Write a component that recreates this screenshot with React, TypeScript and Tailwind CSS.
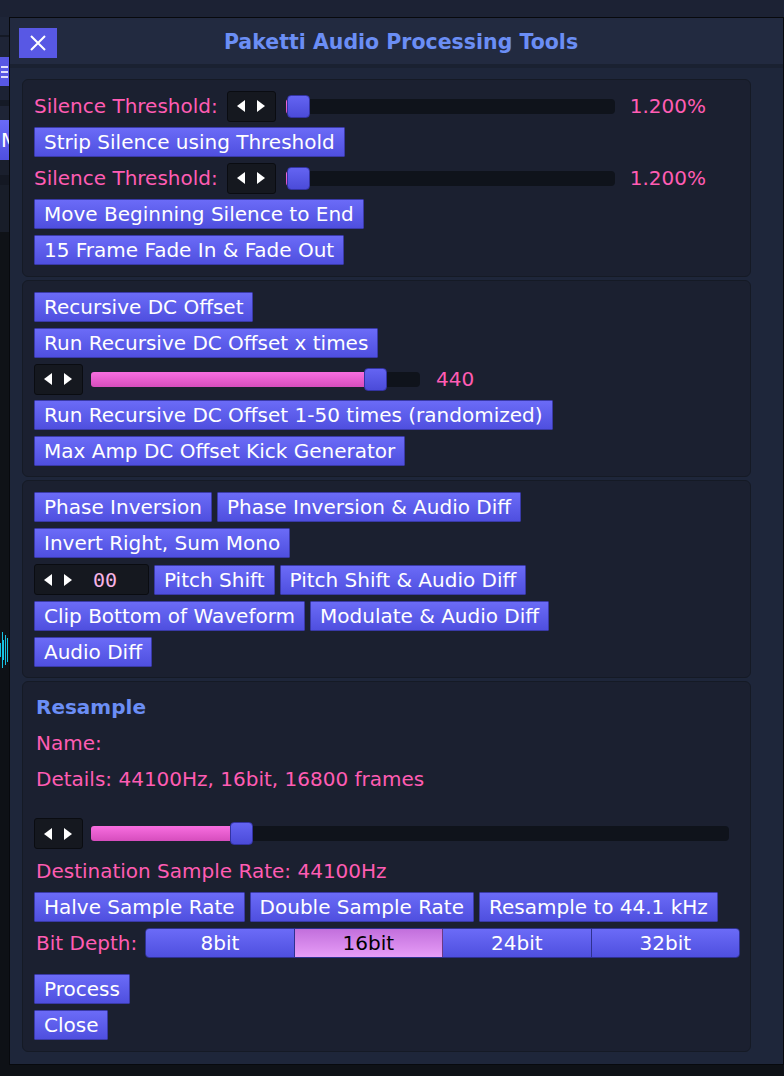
import React from 'react';
import clsx from 'clsx';

const font = { fontFamily: '"DejaVu Sans", "Liberation Sans", sans-serif' };

function Btn({ children, className }: { children: React.ReactNode; className?: string }) {
  return (
    <button
      className={clsx(
        'h-[30px] px-[9px] border border-[#3a3aa8] bg-linear-to-b from-[#6b6bf7] to-[#4f4fdf] text-white text-[20px] leading-none whitespace-nowrap rounded-[1px] flex items-center',
        className
      )}
    >
      {children}
    </button>
  );
}

function Arrows() {
  return (
    <svg width="28" height="14" viewBox="0 0 28 14" className="shrink-0">
      <polygon points="0,7 8,1 8,13" fill="#ffffff" />
      <polygon points="28,7 20,1 20,13" fill="#ffffff" />
    </svg>
  );
}

function ArrowBox({ className, children }: { className?: string; children?: React.ReactNode }) {
  return (
    <div className={clsx('h-[31px] w-[49px] shrink-0 rounded-[3px] border border-[#0a0c11] bg-[#15181f] flex items-center pl-[9px]', className)}>
      <Arrows />
      {children}
    </div>
  );
}

function Slider({ width, pos }: { width: number; pos: number }) {
  return (
    <div className="relative h-[15px] shrink-0 rounded-[4px] bg-[#0f131b]" style={{ width }}>
      <div
        className="absolute left-0 top-0 h-[15px] rounded-[3px] bg-linear-to-b from-[#f86ee0] to-[#d64dbd]"
        style={{ width: pos + 11 }}
      />
      <div
        className="absolute top-[-4px] h-[23px] w-[23px] rounded-[4px] border border-[#3333a2] bg-linear-to-b from-[#6464f2] to-[#4b4bd9]"
        style={{ left: pos }}
      />
    </div>
  );
}

function Pink({ children, className }: { children: React.ReactNode; className?: string }) {
  return <span className={clsx('text-[#ff5cb3] text-[20px] leading-none whitespace-nowrap', className)}>{children}</span>;
}

function Panel({ children, className }: { children: React.ReactNode; className?: string }) {
  return (
    <div className={clsx('w-[729px] rounded-[6px] border border-[#151a25] bg-[#1b2030] pl-[11px] flex flex-col', className)}>
      {children}
    </div>
  );
}

function ThresholdRow() {
  return (
    <div className="flex items-center h-[30px]">
      <Pink>Silence Threshold:</Pink>
      <ArrowBox className="ml-[9px]" />
      <div className="ml-[10px]">
        <Slider width={329} pos={1} />
      </div>
      <Pink className="ml-[15px]">1.200%</Pink>
    </div>
  );
}

export default function App() {
  return (
    <div className="relative h-[1076px] w-[784px] overflow-hidden bg-[#0e1116]" style={font}>
      {/* app behind the dialog */}
      <div className="h-[17px] bg-[#1c2234]" />
      <div className="w-[10px] flex flex-col">
        <div className="h-[18px] bg-[#1e2538]" />
        <div className="h-[2px] bg-[#141925]" />
        <div className="h-[20px] bg-[#1e2436]" />
        <div className="h-[29px] bg-[#5858e4] flex flex-col justify-center gap-[3px] pl-[1px]">
          <div className="h-[2px] w-[7px] bg-white/80" />
          <div className="h-[2px] w-[7px] bg-white/80" />
          <div className="h-[2px] w-[7px] bg-white/80" />
        </div>
        <div className="h-[14px] bg-[#1c2234]" />
        <div className="h-[6px] bg-[#151a26]" />
        <div className="h-[14px] bg-[#1e2436]" />
        <div className="h-[40px] bg-linear-to-b from-[#6a6af6] to-[#4f4fdf] overflow-hidden text-white text-[20px] leading-[40px] pl-[1px]">
          Mo
        </div>
        <div className="h-[15px] bg-[#1a1f2d]" />
        <div className="h-[10px] bg-[#141823]" />
        <div className="h-[47px] bg-[#181d29]" />
        <div className="h-[398px] bg-[#0f1217]" />
        <div className="h-[40px] flex items-center gap-[1px] bg-[#0f1217]">
          <div className="h-[14px] w-[1px] bg-[#17c4e4]" />
          <div className="h-[36px] w-[1px] bg-[#17c4e4]" />
          <div className="h-[20px] w-[1px] bg-[#17c4e4]" />
          <div className="h-[30px] w-[1px] bg-[#17c4e4]" />
          <div className="h-[24px] w-[1px] bg-[#17c4e4]" />
          <div className="h-[12px] w-[2px] bg-[#17c4e4]" />
        </div>
      </div>

      {/* dialog */}
      <div className="absolute left-[9px] top-[17px] w-[775px] h-[1048px] border border-[#07090d] bg-[#1e263a] flex flex-col">
        <div className="h-[46px] bg-[#222a40] grid grid-cols-[1fr_auto_1fr] items-center pl-[9px]">
          <button className="h-[30px] w-[38px] bg-[#5858e4] flex items-center justify-center mt-[3px]">
            <svg width="18" height="18" viewBox="0 0 18 18">
              <path d="M2 2 L16 16 M16 2 L2 16" stroke="#ffffff" strokeWidth="2" />
            </svg>
          </button>
          <div className="text-[#6b8ef5] text-[20.5px] font-bold leading-none mt-[3px]">Paketti Audio Processing Tools</div>
          <div />
        </div>
        <div className="h-[4px] bg-[#1a2131]" />

        <div className="flex flex-col gap-[3px] pl-[12px] pt-[11px]">
          {/* silence */}
          <Panel className="pt-[11px] pb-[11px] gap-[6px]">
            <ThresholdRow />
            <div className="flex">
              <Btn>Strip Silence using Threshold</Btn>
            </div>
            <ThresholdRow />
            <div className="flex">
              <Btn>Move Beginning Silence to End</Btn>
            </div>
            <div className="flex">
              <Btn>15 Frame Fade In &amp; Fade Out</Btn>
            </div>
          </Panel>

          {/* dc offset */}
          <Panel className="pt-[11px] pb-[10px] gap-[6px]">
            <div className="flex">
              <Btn>Recursive DC Offset</Btn>
            </div>
            <div className="flex">
              <Btn>Run Recursive DC Offset x times</Btn>
            </div>
            <div className="flex items-center h-[30px]">
              <ArrowBox />
              <div className="ml-[8px]">
                <Slider width={329} pos={273} />
              </div>
              <Pink className="ml-[16px]">440</Pink>
            </div>
            <div className="flex">
              <Btn>Run Recursive DC Offset 1-50 times (randomized)</Btn>
            </div>
            <div className="flex">
              <Btn>Max Amp DC Offset Kick Generator</Btn>
            </div>
          </Panel>

          {/* phase / pitch */}
          <Panel className="pt-[11px] pb-[10px] gap-[6px]">
            <div className="flex gap-[5px]">
              <Btn>Phase Inversion</Btn>
              <Btn>Phase Inversion &amp; Audio Diff</Btn>
            </div>
            <div className="flex">
              <Btn>Invert Right, Sum Mono</Btn>
            </div>
            <div className="flex items-center gap-[5px]">
              <ArrowBox className="w-[115px]">
                <span
                  className="ml-[21px] text-[20px] leading-none text-[#f7b4e6]"
                  style={{ fontFamily: '"DejaVu Sans Mono", "Liberation Mono", monospace' }}
                >
                  00
                </span>
              </ArrowBox>
              <Btn>Pitch Shift</Btn>
              <Btn>Pitch Shift &amp; Audio Diff</Btn>
            </div>
            <div className="flex gap-[5px]">
              <Btn>Clip Bottom of Waveform</Btn>
              <Btn>Modulate &amp; Audio Diff</Btn>
            </div>
            <div className="flex">
              <Btn>Audio Diff</Btn>
            </div>
          </Panel>

          {/* resample */}
          <Panel className="pt-[10px] pb-[11px]">
            <div className="h-[30px] flex items-center pl-[2px] text-[#6b8ef5] text-[20px] font-bold leading-none">Resample</div>
            <div className="h-[30px] mt-[6px] flex items-center pl-[2px]">
              <Pink>Name:</Pink>
            </div>
            <div className="h-[30px] mt-[6px] flex items-center pl-[2px]">
              <Pink>Details: 44100Hz, 16bit, 16800 frames</Pink>
            </div>
            <div className="flex items-center h-[31px] mt-[24px]">
              <ArrowBox />
              <div className="ml-[8px]">
                <Slider width={638} pos={139} />
              </div>
            </div>
            <div className="h-[30px] mt-[7px] flex items-center pl-[2px]">
              <Pink>Destination Sample Rate: 44100Hz</Pink>
            </div>
            <div className="flex gap-[5px] mt-[6px]">
              <Btn>Halve Sample Rate</Btn>
              <Btn>Double Sample Rate</Btn>
              <Btn>Resample to 44.1 kHz</Btn>
            </div>
            <div className="flex items-center mt-[6px]">
              <Pink className="pl-[2px]">Bit Depth:</Pink>
              <div className="ml-[8px] w-[595px] h-[30px] flex rounded-[4px] overflow-hidden border border-[#2e3190] text-[20px] leading-none">
                <div className="flex-1 flex items-center justify-center bg-linear-to-b from-[#6b6bf7] to-[#4f4fdf] text-white border-r border-[#2e3190]">8bit</div>
                <div className="flex-1 flex items-center justify-center bg-linear-to-b from-[#c26fdc] to-[#e79df7] text-black border-r border-[#6b3a86]">16bit</div>
                <div className="flex-1 flex items-center justify-center bg-linear-to-b from-[#6b6bf7] to-[#4f4fdf] text-white border-r border-[#2e3190]">24bit</div>
                <div className="flex-1 flex items-center justify-center bg-linear-to-b from-[#6b6bf7] to-[#4f4fdf] text-white">32bit</div>
              </div>
            </div>
            <div className="flex mt-[16px]">
              <Btn>Process</Btn>
            </div>
            <div className="flex mt-[6px]">
              <Btn>Close</Btn>
            </div>
          </Panel>
        </div>
      </div>
    </div>
  );
}
